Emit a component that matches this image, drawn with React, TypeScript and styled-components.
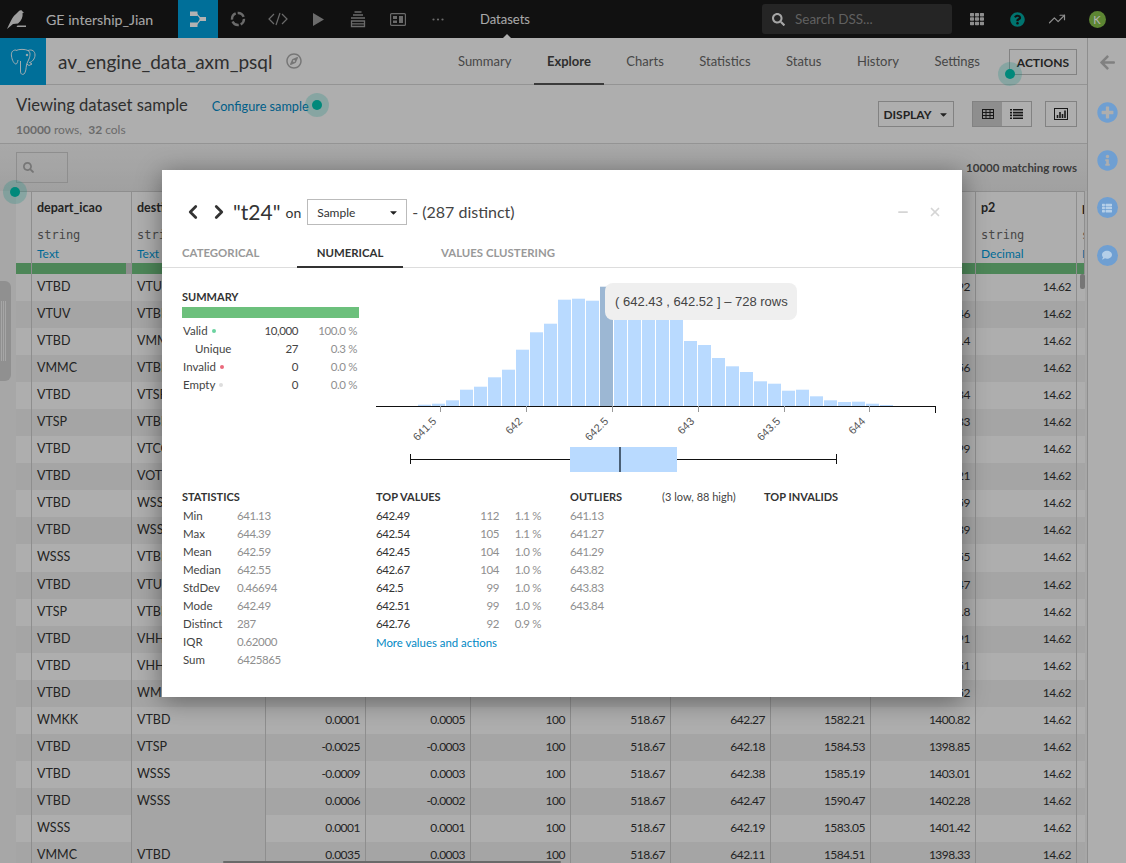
import React from "react";
import styled, { createGlobalStyle } from "styled-components";
import { TrendingUp, ChevronLeft, ChevronRight, X, Minus } from "lucide-react";
import {
  FaArrowLeft,
  FaCaretDown,
  FaComment,
  FaInfoCircle,
  FaPlusCircle,
  FaQuestionCircle,
  FaRegCompass,
  FaSearch,
  FaTh,
  FaThList,
} from "react-icons/fa";

const SANS = `"Lato", "Noto Sans", sans-serif`;

const GlobalStyle = createGlobalStyle`
  html, body { margin: 0; padding: 0; }
  body { font-family: ${SANS}; color: #333; }
  * { box-sizing: border-box; }
`;

const Page = styled.div`
  position: relative;
  width: 1126px;
  height: 863px;
  overflow: hidden;
  background: #fafafa;
  display: flex;
  flex-direction: column;
`;

/* top bar */
const TopBar = styled.div`
  height: 38px;
  flex: none;
  background: #191919;
  display: flex;
  align-items: center;
  color: #eee;
`;
const Logo = styled.div`
  width: 46px;
  padding-left: 7px;
  display: flex;
  align-items: center;
`;
const ProjectName = styled.div`
  width: 132px;
  font-size: 14.2px;
  color: #f0f0f0;
  white-space: nowrap;
`;
const NavCell = styled.div<{ $active?: boolean }>`
  width: 40px;
  height: 38px;
  display: flex;
  align-items: center;
  justify-content: center;
  color: #9a9a9a;
  background: ${(p) => (p.$active ? "#009fdc" : "transparent")};
`;
const Section = styled.div`
  position: relative;
  margin-left: 22px;
  width: 282px;
  height: 38px;
  line-height: 38px;
  font-size: 13px;
  color: #f2f2f2;

  &::after {
    content: "";
    position: absolute;
    left: 23px;
    bottom: 0;
    border: 4px solid transparent;
    border-top: 0;
    border-bottom-color: #fafafa;
  }
`;
const SearchBox = styled.div`
  width: 190px;
  height: 30px;
  background: #353535;
  border-radius: 3px;
  display: flex;
  align-items: center;
  gap: 10px;
  padding-left: 10px;
  font-size: 13.5px;
  color: #8a8a8a;
`;
const TopIcons = styled.div`
  margin-left: 5px;
  display: flex;
`;
const TopIcon = styled.div<{ $color?: string }>`
  width: 40px;
  height: 38px;
  display: flex;
  align-items: center;
  justify-content: center;
  color: ${(p) => p.$color ?? "#ccc"};
`;
const Avatar = styled.div`
  width: 17px;
  height: 17px;
  border-radius: 50%;
  background: #86c04a;
  color: #fff;
  font-size: 11px;
  display: flex;
  align-items: center;
  justify-content: center;
`;

/* main part */
const Body = styled.div`
  flex: 1;
  display: flex;
  min-height: 0;
`;
const Main = styled.div`
  width: 1087px;
  display: flex;
  flex-direction: column;
`;
const SideBar = styled.div`
  width: 39px;
  border-left: 1px solid #ccc;
  display: flex;
  flex-direction: column;
  align-items: center;
  padding-top: 16px;
`;
const SideBack = styled.div`
  height: 48px;
  color: #b8b8b8;
  font-size: 17px;
`;
/* the blue side icons stay vivid above the dimmed layer */
const SideSlot = styled.div`
  position: relative;
  z-index: 1;
  height: 47.5px;
  font-size: 21px;
  color: #6f9fd2;
`;
const SideRound = styled.div`
  width: 21px;
  height: 21px;
  border-radius: 50%;
  background: #6f9fd2;
  color: #b5cfe8;
  display: flex;
  align-items: center;
  justify-content: center;
  font-size: 10px;
`;

const Header = styled.div`
  height: 47px;
  flex: none;
  display: flex;
  align-items: stretch;
  border-bottom: 1px solid #d5d5d5;
`;
const DbBadge = styled.div`
  width: 46px;
  margin-bottom: -1px;
  background: #009fdc;
  display: flex;
  align-items: center;
  justify-content: center;
`;
const DatasetName = styled.div`
  margin-left: 12px;
  font-size: 19px;
  line-height: 47px;
  color: #444;
  white-space: nowrap;
`;
const NameIcon = styled.div`
  margin-left: 14px;
  display: flex;
  align-items: center;
  color: #aaa;
  font-size: 16px;
`;
const Tabs = styled.div`
  margin-left: auto;
  display: flex;
  gap: 9.5px;
`;
const Tab = styled.div<{ $active?: boolean }>`
  padding: 0 13px;
  line-height: 46px;
  height: 47px;
  font-size: 13px;
  font-weight: ${(p) => (p.$active ? 700 : 400)};
  color: ${(p) => (p.$active ? "#444" : "#666")};
  border-bottom: 2px solid ${(p) => (p.$active ? "#555" : "transparent")};
`;
const OutlineButton = styled.div`
  height: 26px;
  display: flex;
  align-items: center;
  justify-content: center;
  gap: 6px;
  border: 1px solid #bbb;
  font-size: 12px;
  font-weight: 700;
  color: #333;
`;
const ActionsButton = styled(OutlineButton)`
  width: 68px;
  margin: 11px 10px 0 16px;
`;

const SubHeader = styled.div`
  height: 59px;
  flex: none;
  padding: 10px 10px 0 16px;
  border-bottom: 1px solid #d5d5d5;
  display: flex;
  justify-content: space-between;
`;
const SampleTitle = styled.div`
  display: flex;
  align-items: baseline;
  gap: 24px;
  font-size: 16.6px;
  color: #444;
`;
const ConfigureLink = styled.span`
  font-size: 12.7px;
  color: #0088c4;
`;
const SampleCount = styled.div`
  margin-top: 7px;
  font-size: 12px;
  color: #999;

  b {
    font-weight: 700;
  }
`;
const Controls = styled.div`
  display: flex;
  margin-top: 6px;
`;
const DisplayButton = styled(OutlineButton)`
  width: 76px;
`;
const Toggle = styled.div`
  margin-left: 18px;
  display: flex;
  height: 26px;
  border: 1px solid #bbb;
`;
const ToggleItem = styled.div<{ $on?: boolean }>`
  width: 29px;
  display: flex;
  align-items: center;
  justify-content: center;
  color: #333;
  background: ${(p) => (p.$on ? "#ccc" : "transparent")};
`;
const ChartButton = styled(OutlineButton)`
  width: 32px;
  margin-left: 13px;
`;

const Toolbar = styled.div`
  height: 47px;
  flex: none;
  padding: 8px 10px 0 16px;
  background: linear-gradient(#f2f2f2, #e6e6e6);
  display: flex;
  justify-content: space-between;
`;
const FilterBox = styled.div`
  width: 52px;
  height: 31px;
  border: 1px solid #ccc;
  display: flex;
  align-items: center;
  padding-left: 6px;
  color: #aaa;
  font-size: 11px;
`;
const MatchCount = styled.div`
  font-size: 11.5px;
  font-weight: 700;
  color: #555;
  margin-top: 9px;
`;

/* table */
const TableArea = styled.div`
  flex: 1;
  position: relative;
  min-height: 0;
  overflow: hidden;
  padding-left: 16px;
  background: #f0f0f0;
`;
const GRID = "16px 100px 134px 100px 105px 100px 100px 100px 100px 105px 101px 8px";
const Table = styled.div`
  width: 1069px;
  background: #fafafa;
`;
const HeadRow = styled.div`
  display: grid;
  grid-template-columns: ${GRID};
  height: 72px;
  border-top: 1px solid #ccc;
`;
const HeadCell = styled.div`
  border-right: 1px solid #ccc;
  padding: 8px 0 0 5px;
  overflow: hidden;
  white-space: nowrap;
`;
const ColName = styled.div`
  font-size: 12.5px;
  font-weight: 700;
  line-height: 16px;
  min-height: 16px;
  color: #333;
`;
const ColType = styled.div`
  margin-top: 11px;
  font-family: "DejaVu Sans Mono", monospace;
  font-size: 12px;
  line-height: 16px;
  min-height: 16px;
  color: #666;
`;
const ColMeaning = styled.div`
  margin-top: 3px;
  font-size: 12px;
  line-height: 16px;
  color: #0099d8;
`;
const QualityRow = styled.div`
  display: grid;
  grid-template-columns: ${GRID};
  height: 11px;
`;
const QualityCell = styled.div`
  background: #6fc07e;
  border-right: 1px solid #ccc;
  position: relative;
  overflow: hidden;
`;
const QualityGap = styled.span`
  position: absolute;
  right: 0;
  top: 0;
  bottom: 0;
  width: 5px;
  background: #ccc;
`;
const Row = styled.div<{ $odd: boolean }>`
  display: grid;
  grid-template-columns: ${GRID};
  height: 27.05px;
  background: ${(p) => (p.$odd ? "#ececec" : "#fafafa")};
`;
const Cell = styled.div<{ $right?: boolean; $empty?: boolean }>`
  border-right: 1px solid #ccc;
  padding: 0 5px;
  line-height: 26px;
  font-size: ${(p) => (p.$right ? 12 : 12.5)}px;
  letter-spacing: ${(p) => (p.$right ? "-0.5px" : "0")};
  color: #333;
  white-space: nowrap;
  overflow: hidden;
  text-align: ${(p) => (p.$right ? "right" : "left")};
  background: ${(p) => (p.$empty ? "#ececec" : "transparent")};
`;
const PaneHandle = styled.div`
  position: absolute;
  left: 0;
  top: 90px;
  width: 11px;
  height: 100px;
  border-radius: 0 6px 6px 0;
  background: #cfcfcf;

  &::after {
    content: "";
    position: absolute;
    left: 1px;
    top: 20px;
    bottom: 20px;
    width: 5px;
    background: repeating-linear-gradient(90deg, #eee 0 1px, #cfcfcf 1px 2px);
  }
`;
const VScroll = styled.div`
  position: absolute;
  left: 1080px;
  top: 83px;
  width: 5px;
  height: 15px;
  border-radius: 2px;
  background: #aaa;
`;
const HScroll = styled.div`
  position: absolute;
  left: 223px;
  bottom: 0;
  width: 338px;
  height: 2px;
  border-radius: 2px;
  background: #999;
`;

/* dialog */
const Overlay = styled.div`
  position: absolute;
  inset: 0;
  background: rgba(0, 0, 0, 0.3);
`;
const Dialog = styled.div`
  position: absolute;
  left: 162px;
  top: 170px;
  width: 800px;
  height: 527px;
  background: #fff;
  padding-top: 29px;
  box-shadow: 0 4px 24px rgba(0, 0, 0, 0.4);
`;
const TitleRow = styled.div`
  height: 26px;
  padding: 0 20px;
  display: flex;
  align-items: center;
  color: #333;
`;
const ColumnTitle = styled.span`
  margin: -2px 0 0 3px;
  font-size: 21px;
  font-weight: 400;
  color: #333;
`;
const TitleOn = styled.span`
  margin: 0 6px 0 5px;
  font-size: 14px;
`;
const SampleSelect = styled.div`
  width: 100px;
  height: 26px;
  border: 1px solid #bbb;
  display: flex;
  align-items: center;
  justify-content: space-between;
  padding: 0 7px 0 9px;
  font-size: 12px;
`;
const TitleRest = styled.span`
  margin: -2px 0 0 5px;
  font-size: 16px;
  color: #444;
`;
const WindowButtons = styled.div`
  margin-left: auto;
  display: flex;
  gap: 18px;
  color: #d5d5d5;
`;
const DialogTabs = styled.div`
  margin-top: 18px;
  height: 25px;
  padding-left: 20px;
  display: flex;
  border-bottom: 1px solid #ddd;
`;
const DialogTab = styled.div<{ $active?: boolean; $width: number; $gap?: number }>`
  width: ${(p) => p.$width}px;
  margin-left: ${(p) => p.$gap ?? 0}px;
  height: 25px;
  line-height: 20px;
  font-size: 11.4px;
  font-weight: 700;
  color: ${(p) => (p.$active ? "#333" : "#999")};
  text-align: ${(p) => (p.$active ? "center" : "left")};
  border-bottom: 2px solid ${(p) => (p.$active ? "#333" : "transparent")};
`;
const TopPart = styled.div`
  display: grid;
  grid-template-columns: 194px 562px;
  padding: 12px 0 0 20px;
`;
const SummaryBox = styled.div`
  padding-top: 10px;
  width: 177px;
`;
const Heading = styled.div`
  height: 14px;
  line-height: 14px;
  font-size: 11px;
  font-weight: 700;
  color: #333;
  white-space: nowrap;
`;
const SummaryBar = styled.div`
  height: 11px;
  margin: 3px 0 4px;
  background: #6cc07c;
`;
const SummaryRow = styled.div`
  display: grid;
  grid-template-columns: 1fr 56px 61px;
  height: 18px;
  line-height: 18px;
  font-size: 11.5px;
  color: #444;
`;
const SummaryLabel = styled.span<{ $indent?: boolean }>`
  padding-left: ${(p) => (p.$indent ? 13 : 1)}px;
  display: flex;
  align-items: center;
  gap: 4px;
`;
const Dot = styled.i<{ $color: string }>`
  width: 4px;
  height: 4px;
  border-radius: 50%;
  background: ${(p) => p.$color};
`;
const Num = styled.span`
  text-align: right;
  letter-spacing: -0.4px;
`;
const Muted = styled.span<{ $right?: boolean }>`
  color: #8f8f8f;
  letter-spacing: -0.4px;
  text-align: ${(p) => (p.$right ? "right" : "left")};
  padding-right: ${(p) => (p.$right ? 2 : 0)}px;
`;
const ChartBox = styled.div`
  position: relative;
  height: 200px;
`;
const ChartTip = styled.div`
  position: absolute;
  left: 229px;
  top: 3px;
  width: 192px;
  height: 37px;
  padding-left: 10px;
  line-height: 37px;
  border-radius: 8px;
  background: #efefef;
  font-family: "Liberation Sans", sans-serif;
  font-size: 13px;
  color: #444;
  white-space: nowrap;
`;
const StatsPart = styled.div`
  margin-top: 10px;
  padding-left: 20px;
  display: grid;
  grid-template-columns: repeat(4, 194px);
`;
const StatRows = styled.div`
  margin-top: 3px;
`;
const StatRow = styled.div`
  display: grid;
  grid-template-columns: 54px 1fr;
  padding-left: 1px;
  height: 18px;
  line-height: 18px;
  font-size: 11.5px;
  color: #444;
`;
const ValueRow = styled.div`
  display: grid;
  grid-template-columns: 76px 49px 42px;
  height: 18px;
  line-height: 18px;
  font-size: 11.5px;
  letter-spacing: -0.4px;
  color: #333;
`;
const MoreLink = styled.div`
  height: 18px;
  line-height: 19px;
  font-size: 11.4px;
  color: #0088c4;
`;
const OutlierHead = styled.div`
  display: flex;
`;
const OutlierNote = styled.span`
  margin-left: 40px;
  font-size: 11px;
  line-height: 14px;
  color: #444;
  white-space: nowrap;
`;
const OutlierRow = styled.div`
  height: 18px;
  line-height: 18px;
  font-size: 11.5px;
  letter-spacing: -0.4px;
  color: #8f8f8f;
`;

/* onboarding dots sit above the dimmed layer */
const Beacon = styled.div<{ $x: number; $y: number }>`
  position: absolute;
  left: ${(p) => p.$x - 12}px;
  top: ${(p) => p.$y - 12}px;
  width: 24px;
  height: 24px;
  border-radius: 50%;
  background: rgba(0, 137, 123, 0.22);
  display: flex;
  align-items: center;
  justify-content: center;

  &::after {
    content: "";
    width: 10px;
    height: 10px;
    border-radius: 50%;
    background: #00897b;
  }
`;

const BirdIcon = () => (
  <svg width="20" height="22" viewBox="0 0 20 22" fill="#e4e4e4">
    <path d="M0 21 C3 15 5 9 9 6 L12 3 C13 2 15 2 15.5 3.5 L17 4.5 L15.6 5 C16 9 14.5 13 11 15.5 L6 16 Z" />
    <path d="M10.5 17.5 H19 V19 H9.5 Z" />
  </svg>
);
const FlowIcon = () => (
  <svg width="18" height="18" viewBox="0 0 18 18" fill="#fff">
    <rect x="1" y="1.5" width="7.5" height="4.5" />
    <rect x="1" y="12.5" width="7.5" height="4.5" />
    <rect x="10.5" y="7" width="6.5" height="4" />
    <path d="M8 3.4 L11.5 7.4 L10.7 8.2 L7.2 4.2 Z M8 15 L11.5 10.4 L10.7 9.6 L7.2 14.2 Z" />
  </svg>
);
const RingIcon = () => (
  <svg width="16" height="16" viewBox="0 0 16 16" fill="none" stroke="currentColor" strokeWidth="2.4">
    <circle cx="8" cy="8" r="6" strokeDasharray="7.4 2" strokeDashoffset="1" />
  </svg>
);
const CodeIcon = () => (
  <svg width="20" height="14" viewBox="0 0 20 14" fill="none" stroke="currentColor" strokeWidth="1.2">
    <path d="M6 2 L1 7 L6 12 M14 2 L19 7 L14 12 M12 1 L8 13" />
  </svg>
);
const PlayIcon = () => (
  <svg width="13" height="15" viewBox="0 0 13 15" fill="currentColor">
    <path d="M1 1 L12 7.5 L1 14 Z" />
  </svg>
);
const StackIcon = () => (
  <svg width="16" height="17" viewBox="0 0 16 17" fill="none" stroke="currentColor" strokeWidth="1.3">
    <path d="M4.5 1 H11.5 M3 4 H13 M1 7 H15 M1.5 10 H14.5 V15.5 H1.5 Z M1.5 12.8 H14.5" />
  </svg>
);
const BoardIcon = () => (
  <svg width="16" height="13" viewBox="0 0 16 13" fill="none" stroke="currentColor" strokeWidth="1.2">
    <rect x="0.6" y="0.6" width="14.8" height="11.8" rx="1" />
    <rect x="3" y="3" width="4" height="3" fill="currentColor" stroke="none" />
    <rect x="3" y="7.5" width="4" height="2.5" fill="currentColor" stroke="none" />
    <rect x="9" y="3" width="4" height="7" fill="currentColor" stroke="none" />
  </svg>
);
const DotsIcon = () => (
  <svg width="12" height="3" viewBox="0 0 12 3" fill="currentColor">
    <circle cx="1.5" cy="1.5" r="1.1" />
    <circle cx="6" cy="1.5" r="1.1" />
    <circle cx="10.5" cy="1.5" r="1.1" />
  </svg>
);
const ElephantIcon = () => (
  <svg width="26" height="28" viewBox="0 0 26 28" fill="none" stroke="#fff" strokeWidth="0.9">
    <path d="M6 2 C2 2 1 5 1.5 8 C2 12 4 16 6 16 C7 16 7.5 14 8 12" />
    <path d="M6 2.5 C9 1 15 1 18 2.5 C21 4 20 8 19 11 C18 13 17 15 16.5 17 C16 20 16 24 14 26 C12 27 10.5 26 10.5 23 V13" />
    <path d="M18 2.5 C22 1 25 3 25 7 C25 11 22 14 19.5 14.5 L22 16 L19 17.5 L16.7 16" />
    <circle cx="17" cy="7" r="0.8" fill="#fff" />
  </svg>
);
const MiniBars = () => (
  <svg width="14" height="12" viewBox="0 0 14 12" fill="none" stroke="#222" strokeWidth="1">
    <rect x="0.5" y="0.5" width="13" height="11" />
    <path d="M3.5 10 V7 M6 10 V4 M8.5 10 V6 M11 10 V2.5" strokeWidth="1.6" />
  </svg>
);
const GridIcon = () => (
  <svg width="12" height="10" viewBox="0 0 12 10" fill="none" stroke="#222" strokeWidth="1">
    <rect x="0.5" y="0.5" width="11" height="9" />
    <path d="M0 3.5 H12 M0 6.5 H12 M4 0 V10 M8 0 V10" />
  </svg>
);
const LinesIcon = () => (
  <svg width="13" height="10" viewBox="0 0 13 10" fill="#222">
    <path d="M0 0 H2 V1.6 H0 Z M3 0 H13 V1.6 H3 Z M0 2.8 H2 V4.4 H0 Z M3 2.8 H13 V4.4 H3 Z M0 5.6 H2 V7.2 H0 Z M3 5.6 H13 V7.2 H3 Z M0 8.4 H2 V10 H0 Z M3 8.4 H13 V10 H3 Z" />
  </svg>
);

const BAR_HEIGHTS = [
  1.3, 2.3, 5.7, 16.3, 19.3, 28.7, 36.3, 56.3, 73.7, 82.3, 106.3, 107.3, 105.3, 119.3, 112, 108, 106, 104, 100, 65, 61,
  48, 39.7, 34, 24.7, 22.3, 15.3, 16.3, 9.7, 5.7, 4, 4.3, 2.3, 1,
];
const AXIS_TICKS: [number, string][] = [
  [64, "641.5"],
  [150, "642"],
  [236, "642.5"],
  [322, "643"],
  [408, "643.5"],
  [493, "644"],
];

function Histogram() {
  const axisY = 126;
  return (
    <svg width="562" height="200" viewBox="0 0 562 200">
      {BAR_HEIGHTS.map((h, i) => (
        <rect
          key={i}
          x={42 + i * 14}
          y={axisY - h}
          width={13}
          height={h}
          fill={i === 13 ? "#9cb7d3" : "#b9daff"}
        />
      ))}
      <path d={`M0 ${axisY + 0.5} H560 M559.5 ${axisY} V${axisY + 7}`} stroke="#111" fill="none" />
      {AXIS_TICKS.map(([x, label]) => (
        <g key={label}>
          <line x1={x + 0.5} x2={x + 0.5} y1={axisY} y2={axisY + 6} stroke="#999" />
          <text
            x={x - 3}
            y={axisY + 16}
            textAnchor="end"
            transform={`rotate(-45 ${x - 3} ${axisY + 16})`}
            fontFamily="Liberation Sans, sans-serif"
            fontSize="11"
            fill="#555"
          >
            {label}
          </text>
        </g>
      ))}
      <path d="M34.5 174 V184 M460.5 174 V184 M34 179.5 H194 M301 179.5 H460" stroke="#111" fill="none" />
      <rect x={194} y={167} width={107} height={25} fill="#b9daff" />
      <rect x={243} y={167} width={2} height={25} fill="#4a5f75" />
    </svg>
  );
}

/* headers of the columns behind the dialog never show, so they stay empty */
const COLUMNS = [
  { name: "", type: "", meaning: "" },
  { name: "depart_icao", type: "string", meaning: "Text" },
  { name: "destination_icao", type: "string", meaning: "Text" },
  { name: "", type: "", meaning: "" },
  { name: "", type: "", meaning: "" },
  { name: "", type: "", meaning: "" },
  { name: "", type: "", meaning: "" },
  { name: "", type: "", meaning: "" },
  { name: "", type: "", meaning: "" },
  { name: "", type: "", meaning: "" },
  { name: "p2", type: "string", meaning: "Decimal" },
  { name: "p15", type: "string", meaning: "Decimal" },
];

const ROUTES = [
  ["VTBD", "VTUV", "1399.92"],
  ["VTUV", "VTBD", "1400.46"],
  ["VTBD", "VMMC", "1398.4"],
  ["VMMC", "VTBD", "1401.56"],
  ["VTBD", "VTSP", "1402.34"],
  ["VTSP", "VTBD", "1399.33"],
  ["VTBD", "VTCC", "1400.99"],
  ["VTBD", "VOTP", "1403.21"],
  ["VTBD", "WSSS", "1398.59"],
  ["VTBD", "WSSS", "1400.39"],
  ["WSSS", "VTBD", "1401.55"],
  ["VTBD", "VTUV", "1399.47"],
  ["VTSP", "VTBD", "1402.8"],
  ["VTBD", "VHHH", "1400.91"],
  ["VTBD", "VHHH", "1401.51"],
  ["VTBD", "WMKK", "1399.52"],
];
const FULL_ROWS = [
  ["WMKK", "VTBD", "0.0001", "0.0005", "100", "518.67", "642.27", "1582.21", "1400.82"],
  ["VTBD", "VTSP", "-0.0025", "-0.0003", "100", "518.67", "642.18", "1584.53", "1398.85"],
  ["VTBD", "WSSS", "-0.0009", "0.0003", "100", "518.67", "642.38", "1585.19", "1403.01"],
  ["VTBD", "WSSS", "0.0006", "-0.0002", "100", "518.67", "642.47", "1590.47", "1402.28"],
  ["WSSS", "", "0.0001", "0.0001", "100", "518.67", "642.19", "1583.05", "1401.42"],
  ["VMMC", "VTBD", "0.0035", "0.0003", "100", "518.67", "642.11", "1584.51", "1398.33"],
];
const TABLE_ROWS = [
  ...ROUTES.map(([a, b, last]) => [a, b, "", "", "", "", "", "", last]),
  ...FULL_ROWS,
];

const STATS = [
  ["Min", "641.13"],
  ["Max", "644.39"],
  ["Mean", "642.59"],
  ["Median", "642.55"],
  ["StdDev", "0.46694"],
  ["Mode", "642.49"],
  ["Distinct", "287"],
  ["IQR", "0.62000"],
  ["Sum", "6425865"],
];
const TOP_VALUES = [
  ["642.49", "112", "1.1 %"],
  ["642.54", "105", "1.1 %"],
  ["642.45", "104", "1.0 %"],
  ["642.67", "104", "1.0 %"],
  ["642.5", "99", "1.0 %"],
  ["642.51", "99", "1.0 %"],
  ["642.76", "92", "0.9 %"],
];
const OUTLIERS = ["641.13", "641.27", "641.29", "643.82", "643.83", "643.84"];
const PAGE_TABS = ["Summary", "Explore", "Charts", "Statistics", "Status", "History", "Settings"];

export default function App() {
  return (
    <Page>
      <GlobalStyle />
      <TopBar>
        <Logo>
          <BirdIcon />
        </Logo>
        <ProjectName>GE intership_Jian</ProjectName>
        <NavCell $active>
          <FlowIcon />
        </NavCell>
        <NavCell>
          <RingIcon />
        </NavCell>
        <NavCell>
          <CodeIcon />
        </NavCell>
        <NavCell>
          <PlayIcon />
        </NavCell>
        <NavCell>
          <StackIcon />
        </NavCell>
        <NavCell>
          <BoardIcon />
        </NavCell>
        <NavCell>
          <DotsIcon />
        </NavCell>
        <Section>Datasets</Section>
        <SearchBox>
          <FaSearch size={13} color="#eee" />
          Search DSS...
        </SearchBox>
        <TopIcons>
          <TopIcon>
            <FaTh size={14} />
          </TopIcon>
          <TopIcon $color="#00a6a0">
            <FaQuestionCircle size={15} />
          </TopIcon>
          <TopIcon>
            <TrendingUp size={18} strokeWidth={1.6} />
          </TopIcon>
          <TopIcon>
            <Avatar>K</Avatar>
          </TopIcon>
        </TopIcons>
      </TopBar>

      <Body>
        <Main>
          <Header>
            <DbBadge>
              <ElephantIcon />
            </DbBadge>
            <DatasetName>av_engine_data_axm_psql</DatasetName>
            <NameIcon>
              <FaRegCompass />
            </NameIcon>
            <Tabs>
              {PAGE_TABS.map((t) => (
                <Tab key={t} $active={t === "Explore"}>
                  {t}
                </Tab>
              ))}
            </Tabs>
            <ActionsButton>ACTIONS</ActionsButton>
          </Header>

          <SubHeader>
            <div>
              <SampleTitle>
                Viewing dataset sample
                <ConfigureLink>Configure sample</ConfigureLink>
              </SampleTitle>
              <SampleCount>
                <b>10000</b> rows,&nbsp; <b>32</b> cols
              </SampleCount>
            </div>
            <Controls>
              <DisplayButton>
                DISPLAY <FaCaretDown size={11} />
              </DisplayButton>
              <Toggle>
                <ToggleItem $on>
                  <GridIcon />
                </ToggleItem>
                <ToggleItem>
                  <LinesIcon />
                </ToggleItem>
              </Toggle>
              <ChartButton>
                <MiniBars />
              </ChartButton>
            </Controls>
          </SubHeader>

          <Toolbar>
            <FilterBox>
              <FaSearch />
            </FilterBox>
            <MatchCount>10000 matching rows</MatchCount>
          </Toolbar>

          <TableArea>
            <Table>
              <HeadRow>
                {COLUMNS.map((c, i) => (
                  <HeadCell key={i}>
                    <ColName>{c.name}</ColName>
                    <ColType>{c.type}</ColType>
                    <ColMeaning>{c.meaning}</ColMeaning>
                  </HeadCell>
                ))}
              </HeadRow>
              <QualityRow>
                {COLUMNS.map((_, i) => (
                  <QualityCell key={i}>{i === 1 && <QualityGap />}</QualityCell>
                ))}
              </QualityRow>
              {TABLE_ROWS.map((row, r) => (
                <Row key={r} $odd={r % 2 === 1}>
                  <Cell />
                  {row.map((v, c) => (
                    <Cell key={c} $right={c > 1} $empty={c === 1 && v === ""}>
                      {v}
                    </Cell>
                  ))}
                  <Cell $right>14.62</Cell>
                  <Cell />
                </Row>
              ))}
            </Table>
            <PaneHandle />
            <VScroll />
            <HScroll />
          </TableArea>
        </Main>

        <SideBar>
          <SideBack>
            <FaArrowLeft />
          </SideBack>
          <SideSlot>
            <FaPlusCircle />
          </SideSlot>
          <SideSlot>
            <FaInfoCircle />
          </SideSlot>
          <SideSlot>
            <SideRound>
              <FaThList />
            </SideRound>
          </SideSlot>
          <SideSlot>
            <SideRound>
              <FaComment />
            </SideRound>
          </SideSlot>
        </SideBar>
      </Body>

      <Overlay />

      <Dialog>
        <TitleRow>
          <ChevronLeft size={22} strokeWidth={3} />
          <ChevronRight size={22} strokeWidth={3} style={{ marginLeft: 4 }} />
          <ColumnTitle>"t24"</ColumnTitle>
          <TitleOn>on</TitleOn>
          <SampleSelect>
            Sample <FaCaretDown size={11} color="#222" />
          </SampleSelect>
          <TitleRest>- (287 distinct)</TitleRest>
          <WindowButtons>
            <Minus size={14} strokeWidth={3} />
            <X size={14} strokeWidth={3} />
          </WindowButtons>
        </TitleRow>

        <DialogTabs>
          <DialogTab $width={115}>CATEGORICAL</DialogTab>
          <DialogTab $active $width={106}>
            NUMERICAL
          </DialogTab>
          <DialogTab $width={140} $gap={38}>
            VALUES CLUSTERING
          </DialogTab>
        </DialogTabs>

        <TopPart>
          <SummaryBox>
            <Heading>SUMMARY</Heading>
            <SummaryBar />
            <SummaryRow>
              <SummaryLabel>
                Valid <Dot $color="#6cd3a0" />
              </SummaryLabel>
              <Num>10,000</Num>
              <Muted $right>100.0 %</Muted>
            </SummaryRow>
            <SummaryRow>
              <SummaryLabel $indent>Unique</SummaryLabel>
              <Num>27</Num>
              <Muted $right>0.3 %</Muted>
            </SummaryRow>
            <SummaryRow>
              <SummaryLabel>
                Invalid <Dot $color="#ea6a7c" />
              </SummaryLabel>
              <Num>0</Num>
              <Muted $right>0.0 %</Muted>
            </SummaryRow>
            <SummaryRow>
              <SummaryLabel>
                Empty <Dot $color="#ddd" />
              </SummaryLabel>
              <Num>0</Num>
              <Muted $right>0.0 %</Muted>
            </SummaryRow>
          </SummaryBox>
          <ChartBox>
            <Histogram />
            <ChartTip>( 642.43 , 642.52 ] – 728 rows</ChartTip>
          </ChartBox>
        </TopPart>

        <StatsPart>
          <div>
            <Heading>STATISTICS</Heading>
            <StatRows>
              {STATS.map(([k, v]) => (
                <StatRow key={k}>
                  <span>{k}</span>
                  <Muted>{v}</Muted>
                </StatRow>
              ))}
            </StatRows>
          </div>
          <div>
            <Heading>TOP VALUES</Heading>
            <StatRows>
              {TOP_VALUES.map(([v, n, pct]) => (
                <ValueRow key={v}>
                  <span>{v}</span>
                  <Muted $right>{n}</Muted>
                  <Muted $right>{pct}</Muted>
                </ValueRow>
              ))}
              <MoreLink>More values and actions</MoreLink>
            </StatRows>
          </div>
          <div>
            <OutlierHead>
              <Heading>OUTLIERS</Heading>
              <OutlierNote>(3 low, 88 high)</OutlierNote>
            </OutlierHead>
            <StatRows>
              {OUTLIERS.map((v) => (
                <OutlierRow key={v}>{v}</OutlierRow>
              ))}
            </StatRows>
          </div>
          <div>
            <Heading>TOP INVALIDS</Heading>
          </div>
        </StatsPart>
      </Dialog>

      <Beacon $x={1010} $y={74} />
      <Beacon $x={317} $y={105} />
      <Beacon $x={15} $y={192} />
    </Page>
  );
}
